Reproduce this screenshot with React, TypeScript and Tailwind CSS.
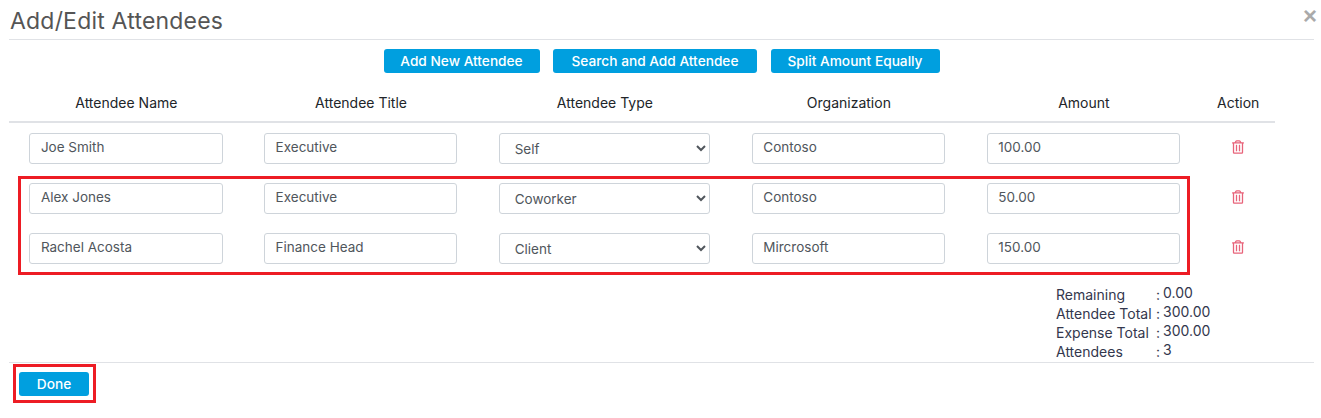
import { FaRegTrashAlt } from "react-icons/fa";

const attendees = [
  { name: "Joe Smith", title: "Executive", type: "Self", org: "Contoso", amount: "100.00" },
  { name: "Alex Jones", title: "Executive", type: "Coworker", org: "Contoso", amount: "50.00" },
  { name: "Rachel Acosta", title: "Finance Head", type: "Client", org: "Mircrosoft", amount: "150.00" },
];

const totals = [
  { label: "Remaining", value: "0.00" },
  { label: "Attendee Total", value: "300.00" },
  { label: "Expense Total", value: "300.00" },
  { label: "Attendees", value: "3" },
];

const columns = "grid grid-cols-[234.7px_234.7px_253px_235px_235px_73.6px]";
const inputClass =
  "w-full h-[31px] px-[10.5px] pb-[4px] border border-[#ced4da] rounded-[3px] bg-white text-[13.5px] text-[#50565c] outline-none";

function TextCell({ value }: { value: string }) {
  return (
    <div className="pl-[20.4px] pr-[21px]">
      <input readOnly value={value} className={inputClass} />
    </div>
  );
}

function BlueButton({ label, className }: { label: string; className: string }) {
  return (
    <button className={`h-6 rounded-[3px] bg-[#009fdf] text-[13.7px] font-medium text-white ${className}`}>
      {label}
    </button>
  );
}

export default function App() {
  return (
    <div className="w-[1321px] h-[418px] overflow-hidden bg-white font-['Inter','Liberation_Sans',sans-serif] text-[#212529]">
      <div className="mx-[9px] w-[1305px] h-10 flex items-center justify-between border-b border-[#e0e2e6]">
        <h1 className="text-[23px] leading-none text-[#555] tracking-[0.2px] pl-px pt-[4px]">Add/Edit Attendees</h1>
        <span className="font-['Liberation_Sans'] font-bold text-[24px] leading-none text-[#aaa] -mt-[8px] -mr-[3px]">×</span>
      </div>

      <div className="mt-[9px] flex justify-center gap-[13.5px] pl-[2px]">
        <BlueButton label="Add New Attendee" className="w-[156px]" />
        <BlueButton label="Search and Add Attendee" className="w-[204px]" />
        <BlueButton label="Split Amount Equally" className="w-[169px]" />
      </div>

      <div className="ml-[9px] w-[1266px]">
        <div className={`${columns} h-[50px] pt-[10px] items-center text-center text-[14px] border-b-2 border-[#e0e2e6]`}>
          <div>Attendee Name</div>
          <div>Attendee Title</div>
          <div>Attendee Type</div>
          <div>Organization</div>
          <div>Amount</div>
          <div>Action</div>
        </div>

        <div className="relative pt-[10px] flex flex-col gap-[19px]">
          {attendees.map((a) => (
            <div key={a.name} className={`${columns} items-center`}>
              <TextCell value={a.name} />
              <TextCell value={a.title} />
              <div className="pl-[20.8px] pr-[21.4px]">
                <select
                  value={a.type}
                  onChange={() => {}}
                  className="w-full h-[31px] pt-[1px] pl-[10.5px] border border-[#ced4da] rounded-[3px] bg-white text-[13.5px] text-[#50565c] outline-none"
                >
                  <option>Self</option>
                  <option>Coworker</option>
                  <option>Client</option>
                </select>
              </div>
              <TextCell value={a.org} />
              <TextCell value={a.amount} />
              <div className="flex justify-center -mt-[3px]">
                <FaRegTrashAlt className="w-[12px] h-[14px] text-[#e8637a]" />
              </div>
            </div>
          ))}
          <div className="absolute left-[9px] top-[53px] w-[1172px] h-[99px] border-[3px] border-[#ed1c24] pointer-events-none" />
        </div>
      </div>

      <div className="mt-[21px] ml-[1056px] flex flex-col text-[14px] leading-[19px] text-[#33374d]">
        {totals.map((t) => (
          <div key={t.label} className="flex">
            <span className="w-[100px]">{t.label}</span>
            <span className="w-[7px]">:</span>
            <span className="-mt-[2px]">{t.value}</span>
          </div>
        ))}
      </div>

      <div className="mx-[9px] w-[1305px] mt-px border-t border-[#e0e2e6] pt-[1px]">
        <div className="ml-1 w-[83px] h-[39px] border-[3px] border-[#ed1c24] flex items-start pl-[3px] pt-[5px]">
          <BlueButton label="Done" className="w-[70px]" />
        </div>
      </div>
    </div>
  );
}
